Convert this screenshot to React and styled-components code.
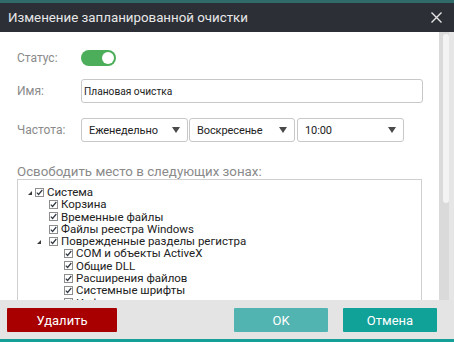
import React from "react";
import styled, { createGlobalStyle } from "styled-components";

const Global = createGlobalStyle`
  html, body { margin: 0; padding: 0; width: 454px; height: 342px; overflow: hidden; background: #e6e6e6; }
  body { font-family: Roboto, "Noto Sans", Arial, sans-serif; }
  * { box-sizing: border-box; }
`;

const Window = styled.div`
  width: 454px;
  height: 342px;
  display: flex;
  flex-direction: column;
  overflow: hidden;
`;

const TopStrip = styled.div`
  height: 3px;
  background: #2f6b68;
`;

const TitleBar = styled.div`
  height: 29px;
  background: #2c2f36;
  display: flex;
  align-items: center;
  justify-content: space-between;
  padding: 0 12px 0 8px;
`;

const Title = styled.div`
  color: #e8e8e8;
  font-size: 13.3px;
`;

const Body = styled.div`
  height: 268px;
  display: flex;
`;

const Content = styled.div`
  flex: 1;
  background: #ffffff;
  overflow: hidden;
  padding: 18px 16px 0 17px;
  display: flex;
  flex-direction: column;
`;

const ScrollTrack = styled.div`
  width: 10px;
  background: #dadada;
  padding: 2px 0 0 4px;
`;

const Thumb = styled.div`
  width: 6px;
  height: 169px;
  background: #f3f3f3;
  border-radius: 3px;
`;

const Edge = styled.div`
  width: 5px;
  background: #e6e6e6;
`;

const FieldRow = styled.div`
  display: flex;
  align-items: center;
  height: ${(p) => p.$h}px;
  margin-top: ${(p) => p.$mt}px;
`;

const Label = styled.div`
  width: 64px;
  flex: none;
  color: #8a8a8a;
  font-size: 12px;
`;

const Toggle = styled.div`
  width: 35px;
  height: 16px;
  border-radius: 8px;
  background: #4cae5a;
  display: flex;
  align-items: center;
  justify-content: flex-end;
  padding-right: 2px;
`;

const Knob = styled.div`
  width: 12px;
  height: 12px;
  border-radius: 50%;
  background: #ffffff;
`;

const TextInput = styled.div`
  flex: 1;
  height: 24px;
  border: 1px solid #c8c8c8;
  border-radius: 3px;
  padding: 0 0 0 2px;
  display: flex;
  align-items: center;
  font-size: 10.2px;
  color: #222;
`;

const Select = styled.div`
  width: ${(p) => p.$w}px;
  height: 24px;
  margin-right: ${(p) => p.$mr}px;
  border: 1px solid #c8c8c8;
  border-radius: 3px;
  padding: 0 7px 0 7px;
  display: flex;
  align-items: center;
  justify-content: space-between;
  font-size: 11px;
  letter-spacing: -0.1px;
  color: #222;
`;

const SectionLabel = styled.div`
  margin-top: 23px;
  font-size: 13.3px;
  line-height: 14px;
  color: #8a8a8a;
`;

const TreeBox = styled.div`
  width: 405px;
  height: 200px;
  flex: none;
  border: 1px solid #cfcfcf;
  padding-top: 6px;
`;

const TreeRow = styled.div`
  display: flex;
  align-items: center;
  height: 12.3px;
  line-height: 12.3px;
  padding-left: ${(p) => p.$pl}px;
  font-size: 11.5px;
  color: #222;
  white-space: nowrap;
`;

const ExpSlot = styled.div`
  width: ${(p) => p.$w}px;
  flex: none;
  display: flex;
  align-items: center;
  padding-top: 2px;
`;

const Check = styled.div`
  width: 9px;
  height: 9px;
  flex: none;
  border: 1px solid #8e8e8e;
  background: #fff;
  margin-right: 3px;
  display: flex;
  align-items: center;
  justify-content: center;
`;

const Footer = styled.div`
  height: 39px;
  background: #e4e4e4;
  display: flex;
  align-items: flex-start;
  padding: 8px 17px 0 7px;
`;

const Button = styled.button`
  width: ${(p) => p.$w}px;
  height: 24px;
  margin-left: ${(p) => p.$ml};
  border: none;
  border-radius: 1px;
  background: ${(p) => p.$bg};
  color: #ffffff;
  font-family: Roboto, Arial, sans-serif;
  font-size: 13px;
  padding: 0;
  cursor: pointer;
`;

const BottomStrip = styled.div`
  height: 3px;
  background: #14a098;
`;

const Arrow = () => (
  <svg width="8" height="6" viewBox="0 0 8 6">
    <polygon points="0,0 8,0 4,6" fill="#4a4a4a" />
  </svg>
);

const Expander = () => (
  <svg width="4" height="4" viewBox="0 0 4 4">
    <polygon points="4,0 4,4 0,4" fill="#3a3a3a" />
  </svg>
);

const CheckMark = () => (
  <svg width="7" height="7" viewBox="0 0 7 7">
    <polyline points="0.8,3.6 2.6,5.5 6.3,1" fill="none" stroke="#333a44" strokeWidth="1.2" />
  </svg>
);

const tree = [
  { t: "Система", exp: true, pl: 10, ew: 7 },
  { t: "Корзина", pl: 31 },
  { t: "Временные файлы", pl: 31 },
  { t: "Файлы реестра Windows", pl: 31 },
  { t: "Поврежденные разделы регистра", exp: true, pl: 19, ew: 12 },
  { t: "COM и объекты ActiveX", pl: 46 },
  { t: "Общие DLL", pl: 46 },
  { t: "Расширения файлов", pl: 46 },
  { t: "Системные шрифты", pl: 46 },
  { t: "Информация о приложениях", pl: 46 },
];

export default function App() {
  return (
    <Window>
      <Global />
      <TopStrip />
      <TitleBar>
        <Title>Изменение запланированной очистки</Title>
        <svg width="11" height="11" viewBox="0 0 11 11">
          <path d="M0.5 0.5 L10.5 10.5 M10.5 0.5 L0.5 10.5" stroke="#e6e6e6" strokeWidth="1.4" />
        </svg>
      </TitleBar>
      <Body>
        <Content>
          <FieldRow $h={16} $mt={0}>
            <Label>Статус:</Label>
            <Toggle>
              <Knob />
            </Toggle>
          </FieldRow>
          <FieldRow $h={24} $mt={13}>
            <Label>Имя:</Label>
            <TextInput>Плановая очистка</TextInput>
          </FieldRow>
          <FieldRow $h={24} $mt={15}>
            <Label>Частота:</Label>
            <Select $w={107} $mr={1}>
              Еженедельно
              <Arrow />
            </Select>
            <Select $w={106} $mr={2}>
              Воскресенье
              <Arrow />
            </Select>
            <Select $w={107} $mr={0}>
              10:00
              <Arrow />
            </Select>
          </FieldRow>
          <SectionLabel>Освободить место в следующих зонах:</SectionLabel>
          <TreeBox>
            {tree.map((r) => (
              <TreeRow key={r.t} $pl={r.pl}>
                {r.exp && (
                  <ExpSlot $w={r.ew}>
                    <Expander />
                  </ExpSlot>
                )}
                <Check>
                  <CheckMark />
                </Check>
                {r.t}
              </TreeRow>
            ))}
          </TreeBox>
        </Content>
        <ScrollTrack>
          <Thumb />
        </ScrollTrack>
        <Edge />
      </Body>
      <Footer>
        <Button $w={110} $ml="0" $bg="#a80000">Удалить</Button>
        <Button $w={94} $ml="auto" $bg="#52b4b1">OK</Button>
        <Button $w={94} $ml="15px" $bg="#10a198">Отмена</Button>
      </Footer>
      <BottomStrip />
    </Window>
  );
}
